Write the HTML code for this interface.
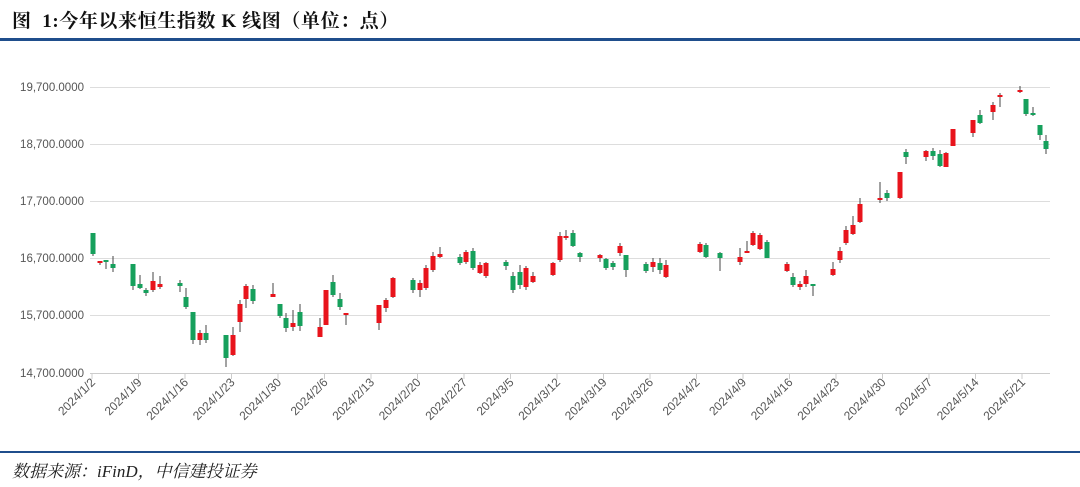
<!DOCTYPE html>
<html><head><meta charset="utf-8"><style>
html,body{margin:0;padding:0;background:#fff;width:1080px;height:487px;overflow:hidden}
.t{position:absolute;left:12px;top:6px;font:bold 19px "Liberation Serif","Noto Serif CJK SC","Noto Sans CJK SC",serif;color:#111;letter-spacing:0.6px}
.s{position:absolute;left:12px;top:457px;font:italic 17px "Liberation Serif","Noto Serif CJK SC","Noto Sans CJK SC",serif;color:#222}
</style></head><body>
<div class="t">图&nbsp; 1:今年以来恒生指数 K 线图（单位：点）</div>
<div style="position:absolute;left:0;top:38px;width:1080px;height:3px;background:#1f4e8c"></div>
<div style="position:absolute;left:0;top:451px;width:1080px;height:2px;background:#1f4e8c"></div>
<div class="s">数据来源：iFinD，中信建投证券</div>
<svg id="c" width="1080" height="487" style="position:absolute;left:0;top:0" font-family="Liberation Sans,sans-serif" font-size="11.5" fill="#555">
<g stroke="#ddd" stroke-width="1">
<line x1="90" y1="87.5" x2="1050" y2="87.5"/><line x1="90" y1="144.5" x2="1050" y2="144.5"/>
<line x1="90" y1="201.5" x2="1050" y2="201.5"/><line x1="90" y1="258.5" x2="1050" y2="258.5"/>
<line x1="90" y1="315.5" x2="1050" y2="315.5"/><line x1="90" y1="373.5" x2="1050" y2="373.5" stroke="#ccc"/>
</g>
<g text-anchor="end">
<text x="84" y="91">19,700.0000</text><text x="84" y="148">18,700.0000</text>
<text x="84" y="205">17,700.0000</text><text x="84" y="262">16,700.0000</text>
<text x="84" y="319">15,700.0000</text><text x="84" y="377">14,700.0000</text>
</g>
<g id="ticks" stroke="#ccc"></g>
<g id="lbl" text-anchor="end" font-size="12">
<text transform="translate(96,383) rotate(-45)">2024/1/2</text>
<text transform="translate(142.5,383) rotate(-45)">2024/1/9</text>
<text transform="translate(189,383) rotate(-45)">2024/1/16</text>
<text transform="translate(235.5,383) rotate(-45)">2024/1/23</text>
<text transform="translate(282,383) rotate(-45)">2024/1/30</text>
<text transform="translate(328.5,383) rotate(-45)">2024/2/6</text>
<text transform="translate(375,383) rotate(-45)">2024/2/13</text>
<text transform="translate(421.5,383) rotate(-45)">2024/2/20</text>
<text transform="translate(468,383) rotate(-45)">2024/2/27</text>
<text transform="translate(514.5,383) rotate(-45)">2024/3/5</text>
<text transform="translate(561,383) rotate(-45)">2024/3/12</text>
<text transform="translate(607.5,383) rotate(-45)">2024/3/19</text>
<text transform="translate(654,383) rotate(-45)">2024/3/26</text>
<text transform="translate(700.5,383) rotate(-45)">2024/4/2</text>
<text transform="translate(747,383) rotate(-45)">2024/4/9</text>
<text transform="translate(793.5,383) rotate(-45)">2024/4/16</text>
<text transform="translate(840,383) rotate(-45)">2024/4/23</text>
<text transform="translate(886.5,383) rotate(-45)">2024/4/30</text>
<text transform="translate(933,383) rotate(-45)">2024/5/7</text>
<text transform="translate(979.5,383) rotate(-45)">2024/5/14</text>
<text transform="translate(1026,383) rotate(-45)">2024/5/21</text>
</g>
<g id="k"></g>
</svg>
<script>
var d=[
[93,'g',233,254,233,256],[100,'r',261,263,261,265],[106,'g',260,262,260,269],[113,'g',264,268,256,272],
[133,'g',264,286,264,290],[140,'g',284,288,275,289],[146,'g',290,293,288,296],[153,'r',281,290,272,292],[160,'r',284,287,276,289],
[180,'g',283,286,280,292],[186,'g',297,307,288,309],[193,'g',312,340,312,344],[200,'r',333,340,330,345],[206,'g',333,340,325,343],
[226,'g',335,358,335,367],[233,'r',335,355,327,356],[240,'r',304,322,300,332],[246,'r',286,299,284,308],[253,'g',289,301,285,304],
[273,'r',294,297,283,297],[280,'g',304,316,304,318],[286,'g',318,328,313,332],[293,'r',323,327,310,331],[300,'g',312,326,304,331],
[320,'r',327,337,318,337],[326,'r',290,325,290,325],[333,'g',282,295,275,297],[340,'g',299,307,293,310],[346,'r',313,315,313,325],
[379,'r',305,323,305,330],[386,'r',300,308,298,312],[393,'r',278,297,277,298],
[413,'g',280,290,278,293],[420,'r',283,290,280,297],[426,'r',268,288,265,290],[433,'r',256,270,252,272],[440,'r',254,257,247,258],
[460,'g',257,263,254,265],[466,'r',252,262,250,264],[473,'g',251,268,248,270],[480,'r',265,273,262,274],[486,'r',263,276,262,278],
[506,'g',262,266,260,270],[513,'g',276,290,272,293],[520,'g',272,285,265,289],[526,'r',268,287,266,290],[533,'r',276,282,272,283],
[553,'r',263,275,262,276],[560,'r',236,260,232,262],[566,'r',236,238,230,240],[573,'g',233,246,230,247],[580,'g',253,257,252,262],
[600,'r',255,258,254,262],[606,'g',259,268,258,270],[613,'g',263,267,261,270],[620,'r',246,253,243,256],[626,'g',255,270,255,277],
[646,'g',264,271,262,273],[653,'r',262,267,258,272],[660,'g',263,270,258,274],[666,'r',265,277,260,278],
[700,'r',244,252,242,253],[706,'g',245,257,243,258],[720,'g',253,258,252,271],
[740,'r',257,262,248,265],[747,'r',251,252,241,253],[753,'r',233,245,231,246],[760,'r',235,249,233,250],[767,'g',242,258,240,258],
[787,'r',264,271,262,272],[793,'g',277,285,273,287],[800,'r',284,287,281,290],[806,'r',276,284,270,287],[813,'g',284,285,284,296],
[833,'r',269,275,262,276],[840,'r',251,260,247,263],[846,'r',230,243,226,245],[853,'r',225,234,216,235],[860,'r',204,222,198,223],
[880,'r',198,199,182,203],[887,'g',193,198,190,201],[900,'r',172,198,172,199],[906,'g',152,157,149,164],
[926,'r',151,157,150,161],[933,'g',151,156,148,160],[940,'g',154,166,150,167],[946,'r',153,167,152,167],[953,'r',129,146,129,146],
[973,'r',120,133,120,137],[980,'g',115,123,110,124],[993,'r',105,112,102,120],[1000,'r',95,97,93,107],
[1020,'r',90,91,86,93],[1026,'g',99,114,99,116],[1033,'g',113,115,107,116],[1040,'g',125,135,125,140],[1046,'g',141,149,135,154]];
var s='';
d.forEach(function(c){var col=c[1]=='r'?'#e8141c':'#16a05c';
s+='<line x1="'+c[0]+'" x2="'+c[0]+'" y1="'+c[4]+'" y2="'+c[5]+'" stroke="#444" stroke-width="1"/>';
s+='<rect x="'+(c[0]-2.5)+'" y="'+c[2]+'" width="5" height="'+Math.max(2,c[3]-c[2])+'" fill="'+col+'"/>';});
document.getElementById('k').innerHTML=s;
var t='';for(var i=0;i<21;i++){var x=92+i*46.5;t+='<line x1="'+x+'" x2="'+x+'" y1="373" y2="379"/>';}
document.getElementById('ticks').innerHTML=t;
</script>
</body></html>
